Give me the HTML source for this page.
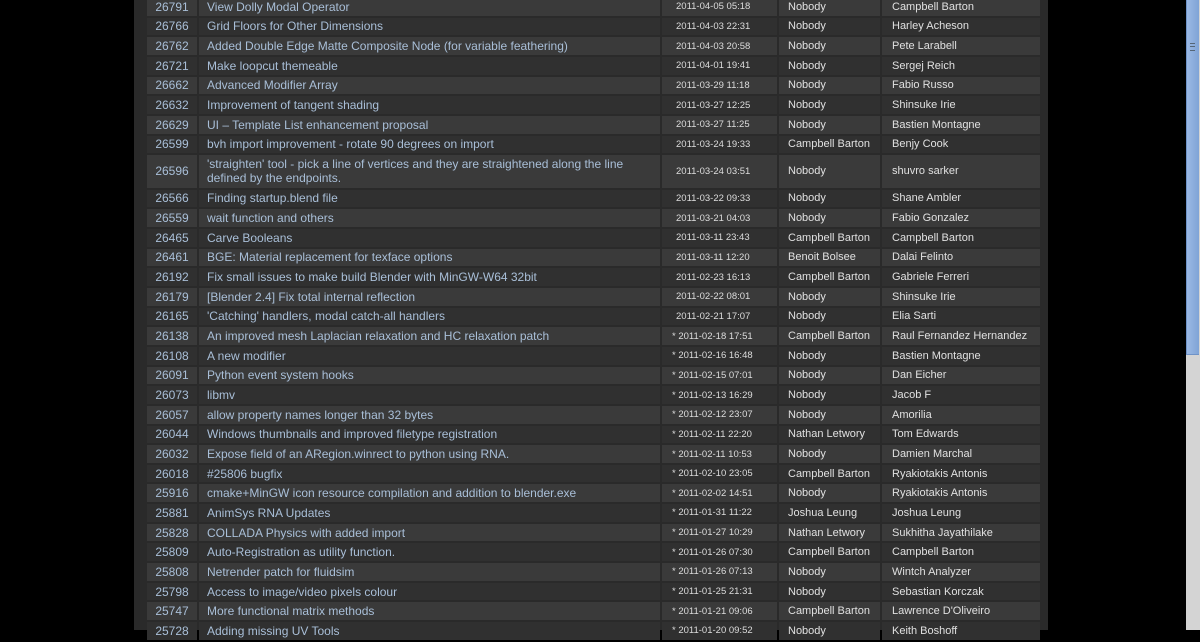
<!DOCTYPE html>
<html><head><meta charset="utf-8"><style>
html,body{margin:0;padding:0;background:#000;width:1200px;height:630px;overflow:hidden;font-family:"Liberation Sans",Arial,sans-serif}
#panel{position:absolute;left:134px;top:0;width:914px;height:630px;background:#2a2a2a}
#rows{position:absolute;left:147px;top:-2px;width:893px}
.r{display:flex;gap:2px;height:17.67px;margin-bottom:2px}
.r.d{height:32.4px}
.r>div{background:#303030;display:flex;align-items:center;white-space:nowrap;overflow:hidden}
.r.l>div{background:#3a3a3a}
.c1{width:50px;justify-content:center;color:#a9bfd8;font-size:12px}
.c2{width:453px;padding-left:8px;color:#a9bfd8;font-size:12px;line-height:14px;white-space:normal!important}
.c3{width:101px;padding-left:14px;color:#ddd;font-size:9.5px}
.c3.s{padding-left:10px;width:105px}
.c4{width:92px;padding-left:9px;color:#e0e0e0;font-size:11px}
.c5{width:148px;padding-left:10px;color:#e0e0e0;font-size:11px}
#sb{position:absolute;left:1186px;top:0;width:14px;height:630px;background:#d4d4d4}
#th{position:absolute;left:1186px;top:0;width:13px;height:355px;background:linear-gradient(90deg,#9bb9e4,#7fa3d6);border-left:1px solid #6f93c8;border-bottom:1px solid #6f93c8;box-sizing:border-box}
#grip{position:absolute;left:1190px;top:43px;width:5px;height:6px;border-top:1px solid #567;border-bottom:1px solid #567}
#grip:after{content:"";position:absolute;left:0;top:2px;width:5px;height:1px;background:#567}
</style></head><body>
<div id="panel"></div>
<div id="rows">
<div class="r l"><div class="c1">26791</div><div class="c2">View Dolly Modal Operator</div><div class="c3">2011-04-05 05:18</div><div class="c4">Nobody</div><div class="c5">Campbell Barton</div></div>
<div class="r"><div class="c1">26766</div><div class="c2">Grid Floors for Other Dimensions</div><div class="c3">2011-04-03 22:31</div><div class="c4">Nobody</div><div class="c5">Harley Acheson</div></div>
<div class="r l"><div class="c1">26762</div><div class="c2">Added Double Edge Matte Composite Node (for variable feathering)</div><div class="c3">2011-04-03 20:58</div><div class="c4">Nobody</div><div class="c5">Pete Larabell</div></div>
<div class="r"><div class="c1">26721</div><div class="c2">Make loopcut themeable</div><div class="c3">2011-04-01 19:41</div><div class="c4">Nobody</div><div class="c5">Sergej Reich</div></div>
<div class="r l"><div class="c1">26662</div><div class="c2">Advanced Modifier Array</div><div class="c3">2011-03-29 11:18</div><div class="c4">Nobody</div><div class="c5">Fabio Russo</div></div>
<div class="r"><div class="c1">26632</div><div class="c2">Improvement of tangent shading</div><div class="c3">2011-03-27 12:25</div><div class="c4">Nobody</div><div class="c5">Shinsuke Irie</div></div>
<div class="r l"><div class="c1">26629</div><div class="c2">UI – Template List enhancement proposal</div><div class="c3">2011-03-27 11:25</div><div class="c4">Nobody</div><div class="c5">Bastien Montagne</div></div>
<div class="r"><div class="c1">26599</div><div class="c2">bvh import improvement - rotate 90 degrees on import</div><div class="c3">2011-03-24 19:33</div><div class="c4">Campbell Barton</div><div class="c5">Benjy Cook</div></div>
<div class="r l d"><div class="c1">26596</div><div class="c2">'straighten' tool - pick a line of vertices and they are straightened along the line defined by the endpoints.</div><div class="c3">2011-03-24 03:51</div><div class="c4">Nobody</div><div class="c5">shuvro sarker</div></div>
<div class="r"><div class="c1">26566</div><div class="c2">Finding startup.blend file</div><div class="c3">2011-03-22 09:33</div><div class="c4">Nobody</div><div class="c5">Shane Ambler</div></div>
<div class="r l"><div class="c1">26559</div><div class="c2">wait function and others</div><div class="c3">2011-03-21 04:03</div><div class="c4">Nobody</div><div class="c5">Fabio Gonzalez</div></div>
<div class="r"><div class="c1">26465</div><div class="c2">Carve Booleans</div><div class="c3">2011-03-11 23:43</div><div class="c4">Campbell Barton</div><div class="c5">Campbell Barton</div></div>
<div class="r l"><div class="c1">26461</div><div class="c2">BGE: Material replacement for texface options</div><div class="c3">2011-03-11 12:20</div><div class="c4">Benoit Bolsee</div><div class="c5">Dalai Felinto</div></div>
<div class="r"><div class="c1">26192</div><div class="c2">Fix small issues to make build Blender with MinGW-W64 32bit</div><div class="c3">2011-02-23 16:13</div><div class="c4">Campbell Barton</div><div class="c5">Gabriele Ferreri</div></div>
<div class="r l"><div class="c1">26179</div><div class="c2">[Blender 2.4] Fix total internal reflection</div><div class="c3">2011-02-22 08:01</div><div class="c4">Nobody</div><div class="c5">Shinsuke Irie</div></div>
<div class="r"><div class="c1">26165</div><div class="c2">'Catching' handlers, modal catch-all handlers</div><div class="c3">2011-02-21 17:07</div><div class="c4">Nobody</div><div class="c5">Elia Sarti</div></div>
<div class="r l"><div class="c1">26138</div><div class="c2">An improved mesh Laplacian relaxation and HC relaxation patch</div><div class="c3 s">* 2011-02-18 17:51</div><div class="c4">Campbell Barton</div><div class="c5">Raul Fernandez Hernandez</div></div>
<div class="r"><div class="c1">26108</div><div class="c2">A new modifier</div><div class="c3 s">* 2011-02-16 16:48</div><div class="c4">Nobody</div><div class="c5">Bastien Montagne</div></div>
<div class="r l"><div class="c1">26091</div><div class="c2">Python event system hooks</div><div class="c3 s">* 2011-02-15 07:01</div><div class="c4">Nobody</div><div class="c5">Dan Eicher</div></div>
<div class="r"><div class="c1">26073</div><div class="c2">libmv</div><div class="c3 s">* 2011-02-13 16:29</div><div class="c4">Nobody</div><div class="c5">Jacob F</div></div>
<div class="r l"><div class="c1">26057</div><div class="c2">allow property names longer than 32 bytes</div><div class="c3 s">* 2011-02-12 23:07</div><div class="c4">Nobody</div><div class="c5">Amorilia</div></div>
<div class="r"><div class="c1">26044</div><div class="c2">Windows thumbnails and improved filetype registration</div><div class="c3 s">* 2011-02-11 22:20</div><div class="c4">Nathan Letwory</div><div class="c5">Tom Edwards</div></div>
<div class="r l"><div class="c1">26032</div><div class="c2">Expose field of an ARegion.winrect to python using RNA.</div><div class="c3 s">* 2011-02-11 10:53</div><div class="c4">Nobody</div><div class="c5">Damien Marchal</div></div>
<div class="r"><div class="c1">26018</div><div class="c2">#25806 bugfix</div><div class="c3 s">* 2011-02-10 23:05</div><div class="c4">Campbell Barton</div><div class="c5">Ryakiotakis Antonis</div></div>
<div class="r l"><div class="c1">25916</div><div class="c2">cmake+MinGW icon resource compilation and addition to blender.exe</div><div class="c3 s">* 2011-02-02 14:51</div><div class="c4">Nobody</div><div class="c5">Ryakiotakis Antonis</div></div>
<div class="r"><div class="c1">25881</div><div class="c2">AnimSys RNA Updates</div><div class="c3 s">* 2011-01-31 11:22</div><div class="c4">Joshua Leung</div><div class="c5">Joshua Leung</div></div>
<div class="r l"><div class="c1">25828</div><div class="c2">COLLADA Physics with added import</div><div class="c3 s">* 2011-01-27 10:29</div><div class="c4">Nathan Letwory</div><div class="c5">Sukhitha Jayathilake</div></div>
<div class="r"><div class="c1">25809</div><div class="c2">Auto-Registration as utility function.</div><div class="c3 s">* 2011-01-26 07:30</div><div class="c4">Campbell Barton</div><div class="c5">Campbell Barton</div></div>
<div class="r l"><div class="c1">25808</div><div class="c2">Netrender patch for fluidsim</div><div class="c3 s">* 2011-01-26 07:13</div><div class="c4">Nobody</div><div class="c5">Wintch Analyzer</div></div>
<div class="r"><div class="c1">25798</div><div class="c2">Access to image/video pixels colour</div><div class="c3 s">* 2011-01-25 21:31</div><div class="c4">Nobody</div><div class="c5">Sebastian Korczak</div></div>
<div class="r l"><div class="c1">25747</div><div class="c2">More functional matrix methods</div><div class="c3 s">* 2011-01-21 09:06</div><div class="c4">Campbell Barton</div><div class="c5">Lawrence D'Oliveiro</div></div>
<div class="r"><div class="c1">25728</div><div class="c2">Adding missing UV Tools</div><div class="c3 s">* 2011-01-20 09:52</div><div class="c4">Nobody</div><div class="c5">Keith Boshoff</div></div>
</div>
<div id="sb"></div><div id="th"></div><div id="grip"></div>
</body></html>
